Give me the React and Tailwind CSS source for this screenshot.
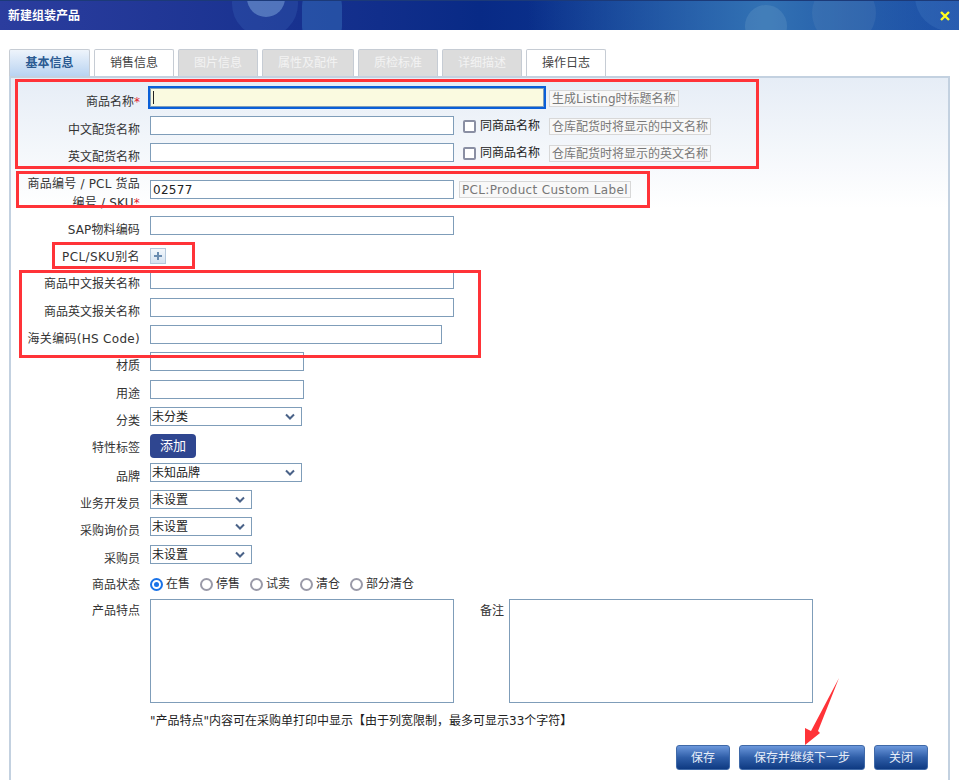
import React from "react";

const inputCls = "h-[19px] border border-[#7f9db9] px-[2px] outline-none text-[12px] text-[#222]";
const font = { fontFamily: '"DejaVu Sans","Noto Sans CJK SC",sans-serif' };

function Label({ children, star, track = "" }) {
  return (
    <label className={"w-[129px] shrink-0 pt-[6px] text-right text-[12px] leading-[16px] text-[#333] whitespace-nowrap " + track}>
      {children}
      {star && <span className="text-[#e0202a]">*</span>}
    </label>
  );
}

function Row({ label, star, track, className = "", children }) {
  return (
    <div className={"flex h-[19px] items-start gap-[10px] " + className}>
      <Label star={star} track={track}>{label}</Label>
      {children}
    </div>
  );
}

function Hint({ children, className = "" }) {
  return (
    <span className={"inline-flex h-[17px] items-center whitespace-nowrap border border-[#d8d8d8] bg-[#f8f8f8] px-[2px] text-[12px] text-[#777] " + className}>
      {children}
    </span>
  );
}

function Same() {
  return (
    <span className="mt-[1px] flex items-center gap-[4px] text-[12px] text-[#222]">
      <span className="-ml-[1px] h-[13px] w-[13px] rounded-[2px] border-2 border-[#8a8fa3] bg-white" />
      同商品名称
    </span>
  );
}

function Select({ value, w }) {
  return (
    <div className={"relative flex h-[19px] items-center border border-[#7f9db9] bg-white pl-[1px] text-[12px] text-[#222] " + w}>
      {value}
      <svg className="absolute right-[6px] top-[5px]" width="10" height="7" viewBox="0 0 10 7">
        <path d="M1 1.5 L5 5.5 L9 1.5" fill="none" stroke="#4a6288" strokeWidth="2" />
      </svg>
    </div>
  );
}

function Radio({ label, on }) {
  return (
    <span className="flex items-center gap-[3px] text-[12px] text-[#333]">
      <span className={"flex h-[13px] w-[13px] items-center justify-center rounded-full border-2 bg-white " + (on ? "border-[#1a73e8]" : "border-[#9a9aa8]")}>
        {on && <span className="h-[5px] w-[5px] rounded-full bg-[#1a73e8]" />}
      </span>
      {label}
    </span>
  );
}

function Btn({ children, w }) {
  return (
    <button className={"h-[25px] rounded-[3px] border border-[#3f69a8] bg-gradient-to-b from-[#6c98dc] via-[#2f5ea8] to-[#0e3a82] text-[12px] text-[#e8eef8] " + w}>
      {children}
    </button>
  );
}

function Tab({ children, kind, w }) {
  const cls =
    kind === "active"
      ? "bg-gradient-to-b from-[#eef4fb] to-[#b9d3f1] font-bold text-[#2a5a92]"
      : kind === "off"
      ? "bg-[#dcdcdc] text-[#f3f3f3]"
      : "bg-white text-[#444]";
  return (
    <div className={"flex h-[27px] items-center justify-center rounded-t-[2px] border border-b-0 border-[#c6ccd4] text-[12px] " + cls + " " + w}>
      {children}
    </div>
  );
}

function Mark({ className }) {
  return <div className={"pointer-events-none absolute border-[3px] border-[#ff3338] " + className} />;
}

export default function App() {
  return (
    <div className="relative h-[780px] w-[959px] overflow-hidden bg-white" style={font}>
      <header className="relative flex h-[30px] items-center justify-between overflow-hidden border-t border-[#1c3a78] bg-gradient-to-r from-[#2b3d9e] via-[#082a86] via-50% to-[#1d50a8] pl-[8px] pr-[9px]">
        <div className="absolute inset-0 bg-gradient-to-r from-transparent from-[55%] via-[#3272b4] via-[80%] to-transparent" />
        <div className="absolute left-[232px] top-[-30px] h-[66px] w-[66px] rounded-full bg-[#3a66b8]/30" />
        <div className="absolute left-[247px] top-[-22px] h-[38px] w-[38px] rounded-full bg-[#7fa8dc]/50" />
        <div className="absolute left-[302px] top-[-15px] h-[60px] w-[40px] rounded-full bg-[#3f80c8]/40" />
        <div className="absolute left-[745px] top-[4px] h-[42px] w-[42px] rounded-full bg-[#6a9cc8]/30" />
        <div className="absolute left-[812px] top-[-20px] h-[64px] w-[64px] rounded-full bg-[#6a8fc0]/20" />
        <div className="absolute left-[915px] top-[-40px] h-[70px] w-[70px] rounded-full bg-[#5a90d0]/20" />
        <span className="relative text-[12px] font-bold text-white">新建组装产品</span>
        <svg className="relative" width="10" height="10" viewBox="0 0 10 10">
          <path d="M1 1 L9 9 M9 1 L1 9" stroke="#ffff20" strokeWidth="2.4" />
        </svg>
      </header>

      <nav className="mt-[19px] flex gap-[4px] pl-[9px]">
        <Tab kind="active" w="w-[81px]">基本信息</Tab>
        <Tab w="w-[80px]">销售信息</Tab>
        <Tab kind="off" w="w-[80px]">图片信息</Tab>
        <Tab kind="off" w="w-[92px]">属性及配件</Tab>
        <Tab kind="off" w="w-[80px]">质检标准</Tab>
        <Tab kind="off" w="w-[80px]">详细描述</Tab>
        <Tab w="w-[80px]">操作日志</Tab>
      </nav>

      <main className="mx-[9px] h-[704px] border-x-2 border-t-2 border-[#c3d1e0] bg-white">
        <div className="flex h-full flex-col bg-[linear-gradient(#e6edf6_0,#ffffff_130px)] pt-[10px]">
          <Row label="商品名称" star>
            <span className="relative flex">
              <input className={inputCls + " w-[394px] bg-[#fafae0] ring-2 ring-[#0a5fd8]"} />
              <span className="absolute left-[3px] top-[3px] h-[13px] w-[1px] bg-[#222]" />
            </span>
            <Hint className="mt-[2px] -ml-[5px]">生成Listing时标题名称</Hint>
          </Row>
          <Row label="中文配货名称" className="mt-[9px]">
            <input className={inputCls + " w-[304px] bg-white"} />
            <Same />
            <Hint className="mt-[2px] -ml-[1px]">仓库配货时将显示的中文名称</Hint>
          </Row>
          <Row label="英文配货名称" className="mt-[8px]">
            <input className={inputCls + " w-[304px] bg-white"} />
            <Same />
            <Hint className="mt-[2px] -ml-[1px]">仓库配货时将显示的英文名称</Hint>
          </Row>
          <div className="mt-[18px] flex h-[19px] items-start gap-[10px]">
            <label className="-mt-[5px] w-[129px] shrink-0 text-right text-[12px] leading-[19px] tracking-[0.2px] text-[#333] whitespace-nowrap">
              商品编号 / PCL 货品<br />编号 / SKU<span className="text-[#e0202a]">*</span>
            </label>
            <input defaultValue="02577" className={inputCls + " w-[304px] bg-white tracking-[0.3px]"} />
            <Hint className="-ml-[5px] mt-[1px] tracking-[0.33px]">PCL:Product Custom Label</Hint>
          </div>
          <Row label="SAP物料编码" track="tracking-[0.15px]" className="mt-[17px]">
            <input className={inputCls + " w-[304px] bg-white"} />
          </Row>
          <div className="mt-[13px] flex h-[16px] items-center gap-[10px]">
            <label className="w-[129px] shrink-0 pt-[1px] text-right text-[12px] leading-[16px] tracking-[0.4px] text-[#333]">PCL/SKU别名</label>
            <button className="flex h-[16px] w-[16px] items-center justify-center border border-[#b4c8dc] bg-gradient-to-b from-[#f4f8fc] to-[#d4e2f0]">
              <svg width="10" height="10" viewBox="0 0 10 10">
                <path d="M5 1 V9 M1 5 H9" stroke="#6a8cb0" strokeWidth="2" />
              </svg>
            </button>
          </div>
          <Row label="商品中文报关名称" className="mt-[6px]">
            <input className={inputCls + " w-[304px] bg-white"} />
          </Row>
          <Row label="商品英文报关名称" className="mt-[9px]">
            <input className={inputCls + " w-[304px] bg-white"} />
          </Row>
          <Row label="海关编码(HS Code)" track="tracking-[0.3px]" className="mt-[8px]">
            <input className={inputCls + " w-[292px] bg-white"} />
          </Row>
          <Row label="材质" className="mt-[8px]">
            <input className={inputCls + " w-[154px] bg-white"} />
          </Row>
          <Row label="用途" className="mt-[9px]">
            <input className={inputCls + " w-[154px] bg-white"} />
          </Row>
          <Row label="分类" className="mt-[8px]">
            <Select value="未分类" w="w-[152px]" />
          </Row>
          <div className="mt-[8px] flex h-[24px] items-start gap-[10px]">
            <label className="w-[129px] shrink-0 pt-[6px] text-right text-[12px] leading-[16px] text-[#333]">特性标签</label>
            <button className="h-[24px] w-[46px] rounded-[4px] bg-[#2f4690] text-[13px] text-white">添加</button>
          </div>
          <Row label="品牌" className="mt-[5px]">
            <Select value="未知品牌" w="w-[152px]" />
          </Row>
          <Row label="业务开发员" className="mt-[8px]">
            <Select value="未设置" w="w-[102px]" />
          </Row>
          <Row label="采购询价员" className="mt-[8px]">
            <Select value="未设置" w="w-[102px]" />
          </Row>
          <Row label="采购员" className="mt-[9px]">
            <Select value="未设置" w="w-[102px]" />
          </Row>
          <div className="mt-[11px] flex h-[18px] items-center gap-[10px]">
            <label className="w-[129px] shrink-0 pt-[1px] text-right text-[12px] leading-[16px] text-[#333]">商品状态</label>
            <div className="flex items-center gap-[10px]">
              <Radio on label="在售" />
              <Radio label="停售" />
              <Radio label="试卖" />
              <Radio label="清仓" />
              <Radio label="部分清仓" />
            </div>
          </div>
          <div className="mt-[6px] flex items-start gap-[10px]">
            <label className="w-[129px] shrink-0 pt-[4px] text-right text-[12px] leading-[16px] text-[#333]">产品特点</label>
            <textarea className="h-[104px] w-[304px] resize-none border border-[#7f9db9] bg-white outline-none" />
            <label className="ml-[16px] -mr-[5px] w-[24px] shrink-0 pt-[4px] text-[12px] leading-[16px] text-[#333]">备注</label>
            <textarea className="h-[104px] w-[304px] resize-none border border-[#7f9db9] bg-white outline-none" />
          </div>
          <p className="ml-[139px] mt-[10px] text-[12px] leading-[16px] text-[#222]">
            "产品特点"内容可在采购单打印中显示【由于列宽限制，最多可显示33个字符】
          </p>
          <div className="mt-[16px] flex justify-end gap-[9px] pr-[20px]">
            <Btn w="w-[54px]">保存</Btn>
            <Btn w="w-[126px]">保存并继续下一步</Btn>
            <Btn w="w-[54px]">关闭</Btn>
          </div>
        </div>
      </main>

      <Mark className="left-[15px] top-[79px] h-[90px] w-[744px]" />
      <Mark className="left-[16px] top-[171px] h-[37px] w-[634px]" />
      <Mark className="left-[52px] top-[242px] h-[27px] w-[143px]" />
      <Mark className="left-[19px] top-[270px] h-[88px] w-[462px]" />
      <svg className="absolute left-[800px] top-[675px]" width="45" height="75" viewBox="800 675 45 75">
        <path d="M839 678 L818 731 L820 733 L805 745 L805 728 L811 731 Z" fill="#ff3338" />
      </svg>
    </div>
  );
}
